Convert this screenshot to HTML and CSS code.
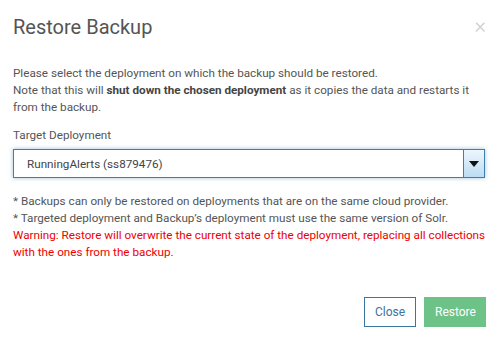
FILE: index.html
```html
<!DOCTYPE html>
<html lang="en">
<head>
    <meta charset="utf-8">
    <title>Restore Backup</title>
    <link rel="stylesheet" href="styles.css">
</head>
<body>
    <div class="modal">
        <div class="modal-header">
            <h2>Restore Backup</h2>
            <span class="close-x">&times;</span>
        </div>
        <div class="modal-body">
            <p>Please select the deployment on which the backup should be restored.<br>
            <span class="nowrap">Note that this will <b>shut down the chosen deployment</b> as it copies the data and restarts it</span>
            from the backup.</p>

            <label class="field-label">Target Deployment</label>
            <div class="select-box">
                <span class="select-value">RunningAlerts (ss879476)</span>
                <span class="select-arrow"></span>
            </div>

            <p class="notes">* Backups can only be restored on deployments that are on the same cloud provider.<br>
            * Targeted deployment and Backup’s deployment must use the same version of Solr.<br>
            <span class="warning">Warning: Restore will overwrite the current state of the deployment, replacing all collections with the ones from the backup.</span></p>
        </div>
        <div class="modal-footer">
            <button class="btn btn-outline">Close</button>
            <button class="btn btn-green">Restore</button>
        </div>
    </div>
</body>
</html>
```

FILE: styles.css
```css
body {
    margin: 0;
    font-family: Roboto, "Liberation Sans", sans-serif;
    background-color: #fff;
    color: #555;
}
.modal {
    width: 497px;
    height: 338px;
    box-sizing: border-box;
    padding: 0 11px 0 13px;
}
.modal-header {
    display: flex;
    justify-content: space-between;
    align-items: flex-start;
    padding-top: 14px;
}
.modal-header h2 {
    margin: 0;
    font-size: 20px;
    font-weight: 400;
    line-height: 26px;
    color: #555;
}
.close-x {
    font-size: 22px;
    font-weight: 300;
    line-height: 18px;
    color: #d0d0d0;
    margin-top: 3px;
    margin-right: 0;
}
.modal-body {
    padding-top: 25px;
    font-size: 11.7px;
    line-height: 17px;
}
.modal-body p {
    margin: 0;
    width: 476px;
}
.modal-body b {
    color: #444;
}
.nowrap {
    white-space: nowrap;
}
.field-label {
    display: block;
    margin-top: 11px;
    margin-bottom: 5px;
}
.select-box {
    display: flex;
    align-items: stretch;
    height: 29px;
    width: 472px;
    box-sizing: border-box;
    border: 1px solid #3d80ae;
    box-shadow: 0 0 4px rgba(61, 128, 174, 0.5);
}
.select-value {
    flex: 1;
    padding: 2px 0 0 13px;
    line-height: 25px;
    color: #444;
}
.select-arrow {
    width: 20px;
    border-left: 1px solid #3d80ae;
    background: linear-gradient(#eef6fc, #bcdcf3);
    position: relative;
}
.select-arrow::after {
    content: "";
    position: absolute;
    left: 5px;
    top: 11px;
    border-left: 5px solid transparent;
    border-right: 5px solid transparent;
    border-top: 6px solid #111;
}
.notes {
    margin-top: 15px !important;
}
.warning {
    color: #e00;
}
.modal-footer {
    display: flex;
    justify-content: flex-end;
    gap: 8px;
    margin-top: 36px;
}
.btn {
    font-family: inherit;
    font-size: 12px;
    height: 30px;
    padding: 0 10px;
    border-radius: 0;
    cursor: pointer;
}
.btn-outline {
    width: 52px;
    background: #fff;
    color: #3a74a0;
    border: 1px solid #3a74a0;
}
.btn-green {
    width: 62px;
    background: #6cc287;
    color: #fff;
    border: 1px solid #6cc287;
}
```
